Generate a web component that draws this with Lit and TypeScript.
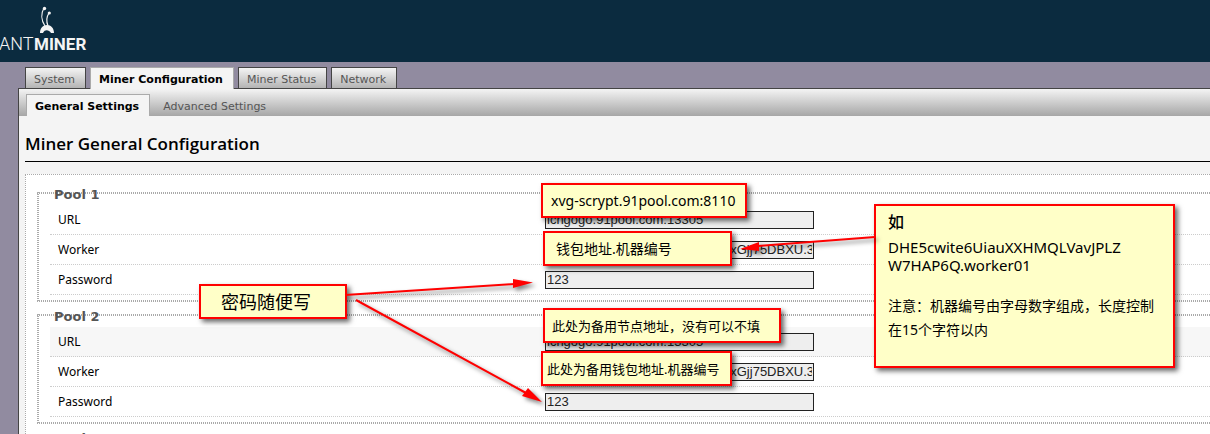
import { LitElement, html, css } from "lit";
import { customElement } from "lit/decorators.js";

const WORKER = "DHE5cwite6UiauXXHMQLVXrDxGjj75DBXU.35";

const pools = [1, 2, 3].map((n) => ({
  n,
  fields: [
    { label: "URL", value: "lchgogo.91pool.com:13305" },
    { label: "Worker", value: WORKER },
    { label: "Password", value: "123" },
  ],
}));

@customElement("app-root")
export class AppRoot extends LitElement {
  static styles = css`
    :host {
      display: block;
      position: relative;
      height: 100vh;
      overflow: hidden;
      background: #918ba0;
      color: #000;
      font-family: "DejaVu Sans", Verdana, sans-serif;
      font-size: 11px;
    }
    .header {
      height: 62px;
      background: #0b2b3f;
    }
    .logo {
      display: block;
    }
    .logo text {
      fill: #f4f4f4;
      font-family: Roboto, sans-serif;
      font-size: 18px;
      font-weight: 300;
    }
    .logo .bold {
      font-size: 17px;
      font-weight: 700;
    }
    .tabs {
      display: flex;
      gap: 4px;
      padding: 5px 0 0 25px;
    }
    a {
      text-decoration: none;
      color: #555;
    }
    .tab {
      box-sizing: border-box;
      height: 21px;
      padding: 0 10px 0 8px;
      line-height: 24px;
      border: 1px solid #444;
      border-bottom: 0;
      background: linear-gradient(#f4f4f4, #b4b4b4);
    }
    .tab.active {
      height: 22px;
      margin-bottom: -1px;
      border-color: #aaa;
      background: #f4f4f4;
      color: #000;
      font-weight: 700;
      z-index: 1;
    }
    .main {
      margin-left: 18px;
      border-left: 1px solid #444;
      border-top: 1px solid #444;
      background: #f4f4f4;
    }
    .subtabs {
      display: flex;
      gap: 4px;
      height: 22px;
      padding: 5px 0 0 7px;
      background: linear-gradient(#f4f4f4, #a6a6a6);
    }
    .sub {
      box-sizing: border-box;
      height: 22px;
      padding: 0 10px 0 8px;
      line-height: 24px;
      border: 1px solid transparent;
      border-bottom: 0;
    }
    .sub.active {
      border-color: #aaa;
      background: #f4f4f4;
      color: #000;
      font-weight: 700;
    }
    .content {
      padding-left: 6px;
    }
    h2 {
      margin: 0 0 12px;
      padding: 16px 0 5px;
      border-bottom: 1px solid #000;
      font: 600 17px/24px "Open Sans", "Trebuchet MS", sans-serif;
    }
    .panel {
      padding: 17px 0 0 11px;
      border-top: 1px dotted #aaa;
      border-left: 1px dotted #aaa;
      background: #fff;
    }
    fieldset {
      min-width: 0;
      margin: 0 0 12px;
      padding: 0 0 7px 13px;
      border: 0;
      --h: repeating-linear-gradient(90deg, #aaa 0 1px, transparent 1px 2px);
      --v: repeating-linear-gradient(#aaa 0 1px, transparent 1px 2px);
      background: var(--h) top / 100% 2px no-repeat, var(--h) bottom / 100% 2px no-repeat,
        var(--v) left / 2px 100% no-repeat;
    }
    legend {
      float: left;
      width: 100%;
      margin-top: -6px;
      padding: 1px 0 2px 4px;
      color: #555;
      font-size: 13px;
      font-weight: 700;
      line-height: 16px;
    }
    .row {
      clear: both;
      box-sizing: border-box;
      display: grid;
      grid-template-columns: 487px 269px;
      align-items: center;
      height: 30px;
      padding: 0 0 0 8px;
      border-bottom: 1px dotted #ccc;
      font: 12px/16px "Noto Sans", Tahoma, sans-serif;
    }
    .row.shade {
      background: #f7f7f7;
    }
    input {
      box-sizing: border-box;
      width: 100%;
      height: 18px;
      padding: 0 1px;
      border: 1px solid #222;
      border-radius: 0;
      background: #eee;
      color: #222;
      font: 13px "Liberation Sans", Arial, sans-serif;
    }
    .note {
      position: absolute;
      box-sizing: border-box;
      display: flex;
      align-items: center;
      border: 2px solid #f00;
      background: #ffffc8;
      box-shadow: 3px 3px 5px rgba(0, 0, 0, 0.6);
      font: 14px/24px "Noto Sans", "Noto Sans CJK SC", sans-serif;
      white-space: nowrap;
    }
    .note p {
      margin: 0;
    }
    .address {
      left: 541px;
      top: 183px;
      width: 206px;
      height: 35px;
      padding-left: 8px;
      font-size: 14px;
    }
    .wallet {
      left: 543px;
      top: 231px;
      width: 189px;
      height: 35px;
      padding-left: 11px;
      font-size: 14px;
    }
    .password {
      left: 199px;
      top: 284px;
      width: 148px;
      height: 35px;
      padding-left: 20px;
      font-size: 18px;
    }
    .backup-node {
      left: 543px;
      top: 308px;
      width: 238px;
      height: 35px;
      padding-left: 7px;
      font-size: 13px;
    }
    .backup-wallet {
      left: 541px;
      top: 351px;
      width: 191px;
      height: 35px;
      padding-left: 4px;
      font-size: 13px;
    }
    .example {
      left: 874px;
      top: 204px;
      width: 301px;
      height: 164px;
      display: block;
      padding: 4px 0 0 12px;
    }
    .example .title {
      font-size: 16px;
      font-weight: 500;
    }
    .example .code {
      margin: 4px 0 20px;
      font-size: 15px;
      line-height: 18px;
    }
    .arrows {
      position: absolute;
      left: 0;
      top: 0;
      pointer-events: none;
      filter: drop-shadow(3px 3px 2px rgba(0, 0, 0, 0.5));
    }
  `;

  render() {
    return html`
      <header class="header">
        <svg class="logo" width="100" height="62" role="img" aria-label="ANTMINER">
          <text x="-1" y="50">ANT</text>
          <text class="bold" x="34" y="50">MINER</text>
          <path d="M40 33C40 28 43 25 47 25C51 25 54 28 54 33H51C49 30 45 29 43 33Z" fill="#f4f4f4" />
          <path d="M45 26C41 20 41 13 44 8M48 26C46 21 47 16 49 13" fill="none" stroke="#f4f4f4" stroke-width="1.2" />
          <circle cx="44.5" cy="8.5" r="1.7" fill="#f4f4f4" />
          <circle cx="49.3" cy="13" r="1.6" fill="#f4f4f4" />
        </svg>
      </header>
      <nav class="tabs">
        <a class="tab" href="#system">System</a>
        <a class="tab active" href="#miner">Miner Configuration</a>
        <a class="tab" href="#status">Miner Status</a>
        <a class="tab" href="#network">Network</a>
      </nav>
      <main class="main">
        <nav class="subtabs">
          <a class="sub active" href="#general">General Settings</a>
          <a class="sub" href="#advanced">Advanced Settings</a>
        </nav>
        <div class="content">
          <h2>Miner General Configuration</h2>
          <form class="panel">
            ${pools.map(
              (pool) => html`
                <fieldset>
                  <legend>Pool ${pool.n}</legend>
                  ${pool.fields.map(
                    (f, i) => html`
                      <div class="row ${pool.n === 2 && i === 0 ? "shade" : ""}">
                        <label for="f${pool.n}-${i}">${f.label}</label>
                        <input id="f${pool.n}-${i}" type="text" .value=${f.value} />
                      </div>
                    `
                  )}
                </fieldset>
              `
            )}
          </form>
        </div>
      </main>
      <div class="note address">xvg-scrypt.91pool.com:8110</div>
      <div class="note wallet">钱包地址.机器编号</div>
      <div class="note password">密码随便写</div>
      <div class="note backup-node">此处为备用节点地址，没有可以不填</div>
      <div class="note backup-wallet">此处为备用钱包地址.机器编号</div>
      <div class="note example">
        <p class="title">如</p>
        <p class="code">DHE5cwite6UiauXXHMQLVavJPLZ<br />W7HAP6Q.worker01</p>
        <p>注意：机器编号由字母数字组成，长度控制<br />在15个字符以内</p>
      </div>
      <svg class="arrows" width="1210" height="434" aria-hidden="true">
        <g stroke="#f00" stroke-width="2" fill="#f00">
          <path d="M345 295L515 284M356 300L526 393M875 237L758 246" />
          <path stroke="none" d="M533 282.500L513 279V288ZM542 402L528 388L522 396ZM740 249L759 242V251Z" />
        </g>
      </svg>
    `;
  }
}
